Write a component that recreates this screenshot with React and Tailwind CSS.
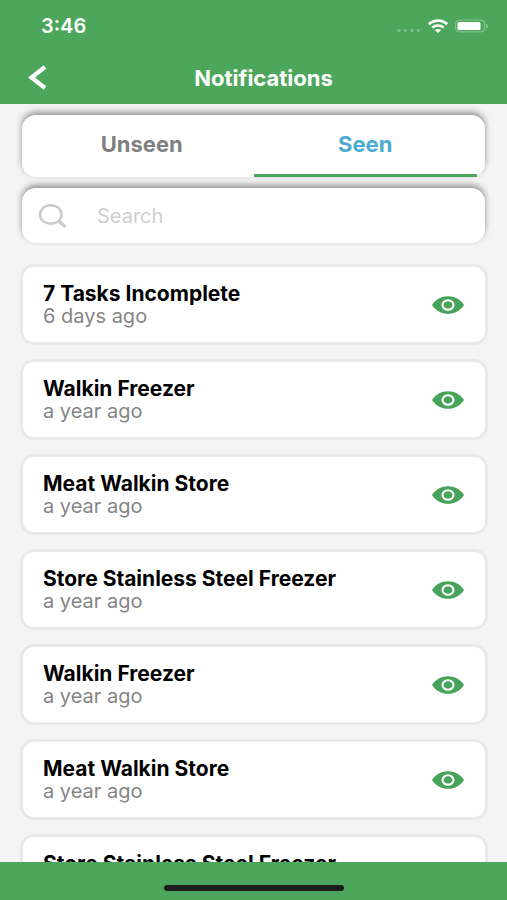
import React, { useState } from "react";

const NOTIFICATIONS = [
  { title: "7 Tasks Incomplete", time: "6 days ago" },
  { title: "Walkin Freezer", time: "a year ago" },
  { title: "Meat Walkin Store", time: "a year ago" },
  { title: "Store Stainless Steel Freezer", time: "a year ago" },
  { title: "Walkin Freezer", time: "a year ago" },
  { title: "Meat Walkin Store", time: "a year ago" },
  { title: "Store Stainless Steel Freezer", time: "a year ago" },
];

function StatusBar() {
  return (
    <div className="flex h-[52px] items-center justify-between pl-[41px] pr-[18px] text-white">
      <span className="text-xl font-semibold">3:46</span>
      <div className="flex items-center gap-[7px]">
        <svg width="24" height="14" viewBox="0 0 24 14" fill="#fff" fillOpacity="0.25" aria-hidden="true">
          <circle cx="2" cy="11.5" r="1.800" />
          <circle cx="8.500" cy="11.5" r="1.800" />
          <circle cx="15" cy="11.5" r="1.800" />
          <circle cx="21.500" cy="11.5" r="1.800" />
        </svg>
        <svg width="20" height="14" viewBox="0 0 20 14" fill="none" aria-hidden="true">
          <path d="M0.800 5.200C6 0.400 14 0.400 19.200 5.200" stroke="#fff" strokeWidth="2.800" />
          <path d="M4.200 8.700C7.400 5.800 12.600 5.800 15.800 8.700" stroke="#fff" strokeWidth="2.400" />
          <path d="M6.800 11.100C8.700 9.500 11.300 9.500 13.200 11.100L10 13.900Z" fill="#fff" />
        </svg>
        <svg width="34" height="14" viewBox="0 0 34 14" fill="none" aria-hidden="true">
          <rect x="0.600" y="1.100" width="29" height="11.800" rx="3.600" stroke="#fff" strokeOpacity="0.35" />
          <rect x="2.500" y="3" width="23" height="8" rx="1.500" fill="#fff" />
          <path d="M31 5C33.400 5.600 33.400 8.600 31 9.200Z" fill="#fff" fillOpacity="0.4" />
        </svg>
      </div>
    </div>
  );
}

function EyeIcon() {
  return (
    <svg width="32" height="18" viewBox="0 0 32 18" aria-hidden="true">
      <path d="M0 9C3.500 3.200 9.500 0.200 16 0.200S28.500 3.200 32 9C28.500 14.800 22.500 17.800 16 17.800S3.500 14.800 0 9Z" fill="#47a35a" />
      <ellipse cx="16" cy="9" rx="5.500" ry="4.800" fill="none" stroke="#fff" strokeWidth="2.100" />
    </svg>
  );
}

function Tab({ label, active, onClick }) {
  return (
    <button
      type="button"
      role="tab"
      aria-selected={active}
      onClick={onClick}
      className={
        "flex-1 border-b-[3px] text-[22px] font-bold " +
        (active ? "border-[#4ca75c] text-[#4aadd0]" : "border-transparent text-[#808080]")
      }
    >
      {label}
    </button>
  );
}

function NotificationCard({ title, time }) {
  return (
    <li className="flex min-h-[81px] items-center justify-between rounded-[14px] border-[3px] border-[#e9e9e9] bg-white pl-5 pr-[21px]">
      <div>
        <h2 className="text-[21px] leading-[22px] font-bold text-black">{title}</h2>
        <p className="text-xl leading-[22px] text-[#858585]">{time}</p>
      </div>
      <button type="button" aria-label={"View " + title}>
        <EyeIcon />
      </button>
    </li>
  );
}

export default function App() {
  const [tab, setTab] = useState("Seen");
  return (
    <div className="flex h-screen flex-col bg-[#f4f4f4] font-['Inter','Liberation_Sans',sans-serif]">
      <header className="bg-[#4ca75c]">
        <StatusBar />
        <div className="grid h-[52px] grid-cols-[1fr_auto_1fr] items-center px-7 text-white">
          <button type="button" aria-label="Back" className="justify-self-start">
            <svg width="20" height="26" viewBox="0 0 20 26" fill="none" aria-hidden="true">
              <path d="M17 2L3.500 12.500L17 23" stroke="#fff" strokeWidth="4.200" />
            </svg>
          </button>
          <h1 className="pl-5 text-[22px] font-bold">Notifications</h1>
        </div>
      </header>

      <main className="flex min-h-0 flex-1 flex-col pt-[11px]">
        <div
          role="tablist"
          className="mx-[22px] flex h-[62px] shrink-0 rounded-[14px] bg-white px-2 shadow-[0_-3px_6px_rgba(0,0,0,0.4)]"
        >
          <Tab label="Unseen" active={tab === "Unseen"} onClick={() => setTab("Unseen")} />
          <Tab label="Seen" active={tab === "Seen"} onClick={() => setTab("Seen")} />
        </div>

        <label className="mx-[22px] mt-[11px] flex h-[55px] shrink-0 items-center gap-[30px] rounded-[14px] bg-white px-4 shadow-[0_-3px_6px_rgba(0,0,0,0.4)]">
          <svg width="29" height="24" viewBox="0 0 29 24" fill="none" aria-hidden="true">
            <ellipse cx="12.800" cy="10.500" rx="10.800" ry="9.300" stroke="#c9c9c9" strokeWidth="2.500" />
            <path d="M20 16.500L27.500 22.800" stroke="#c9c9c9" strokeWidth="3" />
          </svg>
          <input
            type="search"
            aria-label="Search"
            placeholder="Search"
            className="min-w-0 flex-1 text-xl outline-none placeholder:text-[#cfcfcf]"
          />
        </label>

        <ul className="mt-[21px] flex min-h-0 flex-1 flex-col gap-[14px] overflow-y-auto pl-5 pr-[19px] [scrollbar-width:none] *:shrink-0">
          {NOTIFICATIONS.map((item, i) => (
            <NotificationCard key={i} title={item.title} time={item.time} />
          ))}
        </ul>
      </main>

      <footer className="flex h-[38px] shrink-0 items-end justify-center bg-[#4ca75c] pb-[9px]">
        <div className="h-[6px] w-[180px] rounded-full bg-[#1c1c1c]" />
      </footer>
    </div>
  );
}
